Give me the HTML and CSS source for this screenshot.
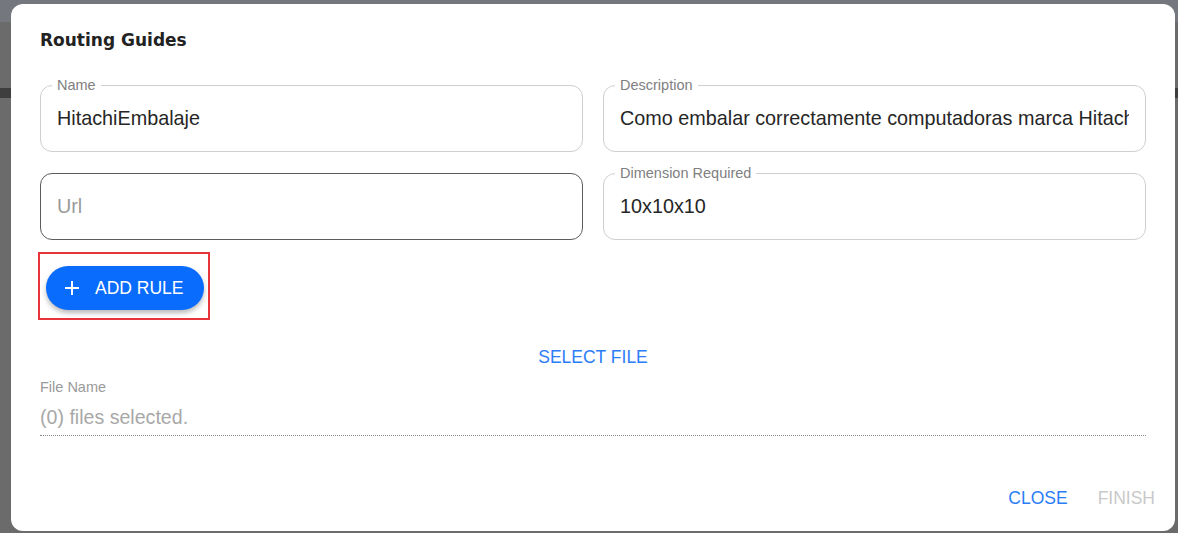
FILE: index.html
```html
<!DOCTYPE html>
<html lang="es">
<head>
<meta charset="utf-8">
<title>Routing Guides</title>
<link rel="stylesheet" href="styles.css">
</head>
<body>
<div class="dialog">
  <h2 class="title">Routing Guides</h2>
  <div class="grid">
    <div class="field">
      <span class="label">Name</span>
      <span class="value">HitachiEmbalaje</span>
    </div>
    <div class="field">
      <span class="label">Description</span>
      <span class="value">Como embalar correctamente computadoras marca Hitachi</span>
    </div>
    <div class="field field-hover">
      <span class="placeholder">Url</span>
    </div>
    <div class="field">
      <span class="label">Dimension Required</span>
      <span class="value">10x10x10</span>
    </div>
  </div>
  <div class="highlight">
    <button class="add-btn">
      <svg class="plus" width="14" height="14" viewBox="0 0 14 14"><path d="M7 0v14M0 7h14" stroke="#fff" stroke-width="2"/></svg>
      <span>ADD RULE</span>
    </button>
  </div>
  <div class="select-row"><span class="link">SELECT FILE</span></div>
  <div class="file-field">
    <div class="file-label">File Name</div>
    <div class="file-value">(0) files selected.</div>
  </div>
  <div class="actions">
    <span class="action close">CLOSE</span>
    <span class="action finish">FINISH</span>
  </div>
</div>
</body>
</html>
```

FILE: styles.css
```css
html, body {
  margin: 0;
  height: 100%;
}
body {
  box-sizing: border-box;
  padding: 4px 3px 2px 11px;
  display: flex;
  background: linear-gradient(to bottom, #74777e 0, #74777e 22px, #6b6b6b 22px, #6b6b6b 88px, #3e3e3e 88px, #3e3e3e 98px, #6b6b6b 98px);
  font-family: "Liberation Sans", Arial, sans-serif;
}
.dialog {
  flex: 1;
  background: #fff;
  border-radius: 12px;
  padding: 0 29px;
  display: flex;
  flex-direction: column;
}
.title {
  margin: 25px 0 0;
  font-family: "DejaVu Sans", sans-serif;
  font-weight: 700;
  font-size: 17px;
  line-height: 22px;
  color: #222;
}
.grid {
  margin-top: 34px;
  display: grid;
  grid-template-columns: 1fr 1fr;
  column-gap: 20px;
  row-gap: 21px;
}
.field {
  position: relative;
  height: 67px;
  box-sizing: border-box;
  border: 1px solid #cfcfcf;
  border-radius: 12px;
  padding: 0 16px;
  display: flex;
  align-items: center;
  min-width: 0;
}
.field-hover {
  border-color: #5c5c5c;
}
.label {
  position: absolute;
  top: -9px;
  left: 11px;
  padding: 0 5px;
  background: #fff;
  font-size: 14.5px;
  line-height: 16px;
  color: #808080;
}
.value, .placeholder {
  font-size: 19.8px;
  color: #262626;
  white-space: nowrap;
  overflow: hidden;
  text-overflow: clip;
}
.placeholder {
  color: #9a9a9a;
}
.highlight {
  align-self: flex-start;
  margin: 12px 0 0 -2px;
  border: 2px solid #e8353a;
  padding: 12px 4px 8px 6px;
  display: flex;
}
.add-btn {
  width: 158px;
  height: 44px;
  border: 0;
  border-radius: 22px;
  background: #0a6cfd;
  color: #fff;
  box-shadow: 0 3px 5px rgba(0, 0, 0, 0.28);
  display: flex;
  align-items: center;
  gap: 16px;
  padding: 0 0 0 19px;
  font-family: "Liberation Sans", Arial, sans-serif;
  font-size: 17.5px;
  font-weight: 400;
}
.select-row {
  margin-top: 27px;
  display: flex;
  justify-content: center;
}
.link {
  color: #2b7df8;
  font-size: 17.5px;
  line-height: 20px;
}
.file-field {
  margin-top: 12px;
  border-bottom: 1px dotted #8a8a8a;
}
.file-label {
  font-size: 14.5px;
  line-height: 16px;
  color: #9a9a9a;
}
.file-value {
  margin-top: 10px;
  font-size: 19.6px;
  line-height: 24px;
  color: #a8a8a8;
  padding-bottom: 6px;
}
.actions {
  margin: 52px -9px 0 0;
  display: flex;
  justify-content: flex-end;
  gap: 30px;
}
.action {
  font-size: 17.5px;
  line-height: 20px;
}
.close { color: #2b7df8; }
.finish { color: #c9c9c9; }
```
